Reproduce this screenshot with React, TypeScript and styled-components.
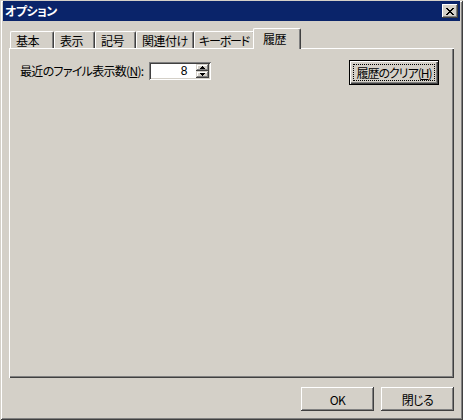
import React from "react";
import styled, { createGlobalStyle } from "styled-components";

const face = "#d4d0c8";
const light = "#ffffff";
const shadow = "#808080";
const dark = "#404040";

const GlobalStyle = createGlobalStyle`
  html, body {
    margin: 0;
    padding: 0;
    background: ${face};
  }
  body {
    font-family: "Noto Sans CJK JP", "MS UI Gothic", sans-serif;
    font-size: 12px;
    color: #000;
  }
`;

const Window = styled.div`
  width: 463px;
  height: 420px;
  box-sizing: border-box;
  padding: 1px 3px 2px 3px;
  background: ${face};
  box-shadow: inset 1px 1px ${face}, inset -1px -1px ${dark},
    inset 2px 2px ${light}, inset -2px -2px ${shadow};
  display: flex;
  flex-direction: column;
  font-feature-settings: "palt";
  letter-spacing: -0.5px;
`;

const TitleBar = styled.div`
  height: 20px;
  background: #0a246a;
  display: flex;
  align-items: center;
  padding: 0 2px;
`;

const Title = styled.span`
  flex: 1;
  color: #fff;
  font-weight: bold;
  font-size: 12px;
  line-height: 20px;
`;

const CloseButton = styled.button`
  width: 16px;
  height: 14px;
  padding: 0;
  border: none;
  background: ${face};
  box-shadow: inset -1px -1px ${dark}, inset 1px 1px ${light},
    inset -2px -2px ${shadow}, inset 2px 2px ${face};
  display: flex;
  align-items: center;
  justify-content: center;
`;

const Body = styled.div`
  flex: 1;
  display: flex;
  flex-direction: column;
  padding: 7px 6px 7px 6px;
`;

const TabStrip = styled.div`
  display: flex;
  align-items: flex-end;
  height: 20px;
  padding-left: 1px;
`;

const Tab = styled.div<{ $w: number; $active?: boolean; $tight?: boolean }>`
  box-sizing: border-box;
  width: ${(p) => p.$w + (p.$active ? 4 : 0)}px;
  height: ${(p) => (p.$active ? 21 : 17)}px;
  margin: 0 ${(p) => (p.$active ? -2 : 0)}px
    ${(p) => (p.$active ? -1 : 0)}px;
  padding: ${(p) => (p.$active ? "0 0 1px 9px" : p.$tight ? "0 0 0 4px" : "0 0 0 5px")};
  letter-spacing: ${(p) => (p.$tight ? "-1.2px" : "-0.5px")};
  border-top: 1px solid ${light};
  border-left: 1px solid ${light};
  border-right: 1px solid ${dark};
  border-radius: 2px 2px 0 0;
  box-shadow: inset -1px 0 ${shadow};
  background: ${face};
  display: flex;
  align-items: center;
  white-space: nowrap;
  overflow: hidden;
  position: relative;
  z-index: ${(p) => (p.$active ? 2 : 0)};
`;

const Panel = styled.div`
  height: 330px;
  box-sizing: border-box;
  padding: 12px 15px 0 11px;
  box-shadow: inset 1px 1px ${light}, inset -1px -1px ${dark},
    inset -2px -2px ${shadow};
  position: relative;
  z-index: 1;
`;

const Row = styled.div`
  display: flex;
  align-items: flex-start;
`;

const FieldGroup = styled.div`
  display: flex;
  align-items: center;
  gap: 6px;
  margin-top: 2px;
`;

const Label = styled.span`
  white-space: nowrap;
  line-height: 18px;
  letter-spacing: -0.7px;
`;

const SpinBox = styled.div`
  width: 62px;
  height: 18px;
  box-sizing: border-box;
  padding: 2px;
  background: #fff;
  box-shadow: inset 1px 1px ${shadow}, inset -1px -1px ${light},
    inset 2px 2px ${dark}, inset -2px -2px ${face};
  display: flex;
`;

const SpinValue = styled.span`
  flex: 1;
  text-align: right;
  padding-right: 9px;
  line-height: 14px;
  font-family: "Liberation Sans", sans-serif;
  font-size: 12px;
  letter-spacing: 0;
`;

const SpinButtons = styled.div`
  width: 13px;
  display: flex;
  flex-direction: column;
`;

const SpinButton = styled.div`
  flex: 1;
  background: ${face};
  box-shadow: inset -1px -1px ${dark}, inset 1px 1px ${face},
    inset -2px -2px ${shadow}, inset 2px 2px ${light};
  display: flex;
  align-items: center;
  justify-content: center;
`;

const PushButton = styled.button<{ $w: number; $h: number; $default?: boolean }>`
  width: ${(p) => p.$w}px;
  height: ${(p) => p.$h}px;
  padding: 0;
  font: inherit;
  font-feature-settings: "palt";
  letter-spacing: ${(p) => (p.$default ? "-1px" : "-0.5px")};
  color: #000;
  background: ${face};
  border: ${(p) => (p.$default ? "1px solid #000" : "none")};
  box-shadow: ${(p) =>
    p.$default
      ? `inset 1px 1px ${light}, inset -1px -1px ${dark}, inset -2px -2px ${shadow}`
      : `inset -1px -1px ${dark}, inset 1px 1px ${light}, inset -2px -2px ${shadow}, inset 2px 2px ${face}`};
  outline: ${(p) => (p.$default ? "1px dotted #000" : "none")};
  outline-offset: -5px;
  white-space: nowrap;
`;

const ClearButton = styled(PushButton)`
  margin-left: auto;
`;

const Footer = styled.div`
  display: flex;
  justify-content: flex-end;
  gap: 7px;
  padding-top: 9px;
`;

const Arrow = ({ up }: { up?: boolean }) => (
  <svg width="5" height="3" viewBox="0 0 5 3" shapeRendering="crispEdges">
    <path d={up ? "M2 0h1v1h1v1h1v1H0V2h1V1h1z" : "M0 0h5v1H4v1H3v1H2V2H1V1H0z"} fill="#000" />
  </svg>
);

const CloseGlyph = () => (
  <svg width="8" height="7" viewBox="0 0 8 7" shapeRendering="crispEdges">
    <path
      d="M0 0h2v1h1v1h2V1h1V0h2v1H7v1H6v1H5v1h1v1h1v1h1v1H6V6H5V5H3v1H2v1H0V6h1V5h1V4h1V3H2V2H1V1H0z"
      fill="#000"
    />
  </svg>
);

const tabs = [
  { label: "基本", w: 44 },
  { label: "表示", w: 41 },
  { label: "記号", w: 41 },
  { label: "関連付け", w: 58 },
  { label: "キーボード", w: 61, tight: true },
  { label: "履歴", w: 44, active: true },
];

export default function App() {
  return (
    <>
      <GlobalStyle />
      <Window>
        <TitleBar>
          <Title>オプション</Title>
          <CloseButton>
            <CloseGlyph />
          </CloseButton>
        </TitleBar>
        <Body>
          <TabStrip>
            {tabs.map((t) => (
              <Tab key={t.label} $w={t.w} $active={t.active} $tight={t.tight}>
                {t.label}
              </Tab>
            ))}
          </TabStrip>
          <Panel>
            <Row>
              <FieldGroup>
                <Label>
                  最近のファイル表示数(<u>N</u>):
                </Label>
                <SpinBox>
                  <SpinValue>8</SpinValue>
                  <SpinButtons>
                    <SpinButton>
                      <Arrow up />
                    </SpinButton>
                    <SpinButton>
                      <Arrow />
                    </SpinButton>
                  </SpinButtons>
                </SpinBox>
              </FieldGroup>
              <ClearButton $w={90} $h={25} $default>
                履歴のクリア(<u>H</u>)
              </ClearButton>
            </Row>
          </Panel>
          <Footer>
            <PushButton $w={73} $h={24}>OK</PushButton>
            <PushButton $w={73} $h={24}>閉じる</PushButton>
          </Footer>
        </Body>
      </Window>
    </>
  );
}
